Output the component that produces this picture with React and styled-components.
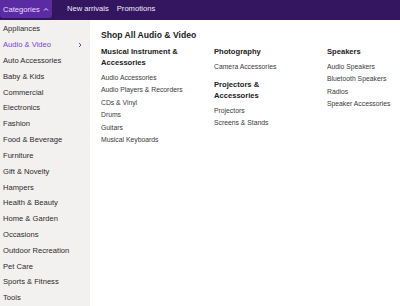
import React from "react";
import styled, { createGlobalStyle } from "styled-components";

const Global = createGlobalStyle`
  html, body { margin: 0; padding: 0; background: #fff; }
  body { font-family: "Liberation Sans", Arial, sans-serif; -webkit-font-smoothing: antialiased; }
  * { box-sizing: border-box; }
`;

const Page = styled.div`
  width: 400px;
  height: 306px;
  display: flex;
  flex-direction: column;
  overflow: hidden;
`;

const TopBar = styled.div`
  height: 20px;
  background: #33165f;
  display: flex;
  align-items: flex-start;
`;

const CatButton = styled.button`
  height: 18px;
  width: 52px;
  border: none;
  border-radius: 0 0 3px 3px;
  background: #5b2ba3;
  color: #e8dcff;
  font-family: inherit;
  font-size: 7.6px;
  display: flex;
  align-items: center;
  gap: 3px;
  padding: 0 0 0 3px;
  margin: 0;
`;

const NavLink = styled.span`
  color: #f1ecfa;
  font-size: 7.6px;
  line-height: 18px;
  margin-left: ${(p) => p.$ml}px;
`;

const Body = styled.div`
  flex: 1;
  display: flex;
  min-height: 0;
`;

const Sidebar = styled.div`
  width: 90px;
  background: #f3f1ef;
  display: flex;
  flex-direction: column;
  padding-top: 1px;
`;

const SideItem = styled.div`
  height: 15.82px;
  display: flex;
  align-items: center;
  justify-content: space-between;
  padding: 0 7px 0 3px;
  font-size: 7.6px;
  color: ${(p) => (p.$active ? "#7b3fd6" : "#2b2b2b")};
  white-space: nowrap;
`;

const Content = styled.div`
  flex: 1;
  padding: 10px 0 0 11px;
  display: flex;
  flex-direction: column;
`;

const Title = styled.div`
  font-size: 8.6px;
  font-weight: bold;
  color: #222;
  line-height: 11px;
`;

const Columns = styled.div`
  display: grid;
  grid-template-columns: 113px 113px 1fr;
  margin-top: 5px;
`;

const Col = styled.div`
  display: flex;
  flex-direction: column;
`;

const Head = styled.div`
  font-size: 7.6px;
  font-weight: bold;
  color: #222;
  line-height: 11px;
  margin-top: ${(p) => p.$mt || 0}px;
  margin-bottom: 3.5px;
  padding-right: 26px;
`;

const Link = styled.div`
  font-size: 6.8px;
  color: #3a3a3a;
  line-height: 12.6px;
`;

const Chevron = () => (
  <svg width="6" height="6" viewBox="0 0 6 6">
    <path d="M2 1 L4 3 L2 5" fill="none" stroke="#7b3fd6" strokeWidth="1" />
  </svg>
);

const Caret = () => (
  <svg width="6" height="5" viewBox="0 0 6 5">
    <path d="M1 3.5 L3 1.5 L5 3.5" fill="none" stroke="#e8dcff" strokeWidth="1" />
  </svg>
);

const cats = [
  "Appliances", "Audio & Video", "Auto Accessories", "Baby & Kids", "Commercial",
  "Electronics", "Fashion", "Food & Beverage", "Furniture", "Gift & Novelty",
  "Hampers", "Health & Beauty", "Home & Garden", "Occasions", "Outdoor Recreation",
  "Pet Care", "Sports & Fitness", "Tools",
];

export default function App() {
  return (
    <Page>
      <Global />
      <TopBar>
        <CatButton>Categories <Caret /></CatButton>
        <NavLink $ml={15}>New arrivals</NavLink>
        <NavLink $ml={8}>Promotions</NavLink>
      </TopBar>
      <Body>
        <Sidebar>
          {cats.map((c) => (
            <SideItem key={c} $active={c === "Audio & Video"}>
              {c}
              {c === "Audio & Video" && <Chevron />}
            </SideItem>
          ))}
        </Sidebar>
        <Content>
          <Title>Shop All Audio &amp; Video</Title>
          <Columns>
            <Col>
              <Head>Musical Instrument &amp; Accessories</Head>
              <Link>Audio Accessories</Link>
              <Link>Audio Players &amp; Recorders</Link>
              <Link>CDs &amp; Vinyl</Link>
              <Link>Drums</Link>
              <Link>Guitars</Link>
              <Link>Musical Keyboards</Link>
            </Col>
            <Col>
              <Head>Photography</Head>
              <Link>Camera Accessories</Link>
              <Head $mt={6}>Projectors &amp; Accessories</Head>
              <Link>Projectors</Link>
              <Link>Screens &amp; Stands</Link>
            </Col>
            <Col>
              <Head>Speakers</Head>
              <Link>Audio Speakers</Link>
              <Link>Bluetooth Speakers</Link>
              <Link>Radios</Link>
              <Link>Speaker Accessories</Link>
            </Col>
          </Columns>
        </Content>
      </Body>
    </Page>
  );
}
